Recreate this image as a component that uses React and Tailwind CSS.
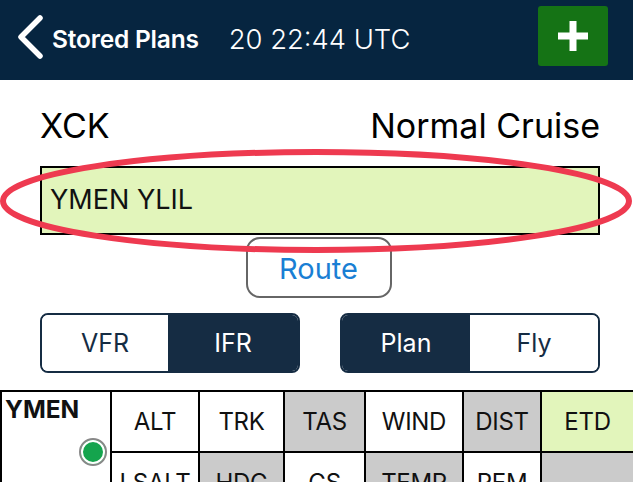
import React from "react";

const font = { fontFamily: "Inter, 'Liberation Sans', sans-serif" };

function Cell({ children, className = "" }) {
	return (
		<div
			className={`flex items-center justify-center text-[24px] tracking-[-0.3px] text-[#111] ${className}`}
		>
			{children}
		</div>
	);
}

function Segment({ left, right, activeLeft, split }) {
	return (
		<div className={`grid h-[60px] w-[260px] overflow-hidden rounded-[8px] border-2 border-[#152c43] text-[25px] ${split}`}>
			<div className={`flex items-center justify-center pt-[2px] ${activeLeft ? "bg-[#152c43] text-white" : "bg-white text-[#152c43]"}`}>
				{left}
			</div>
			<div className={`flex items-center justify-center pt-[2px] ${activeLeft ? "bg-white text-[#152c43]" : "bg-[#152c43] text-white"}`}>
				{right}
			</div>
		</div>
	);
}

export default function App() {
	return (
		<div className="relative h-[482px] w-[633px] overflow-hidden bg-white" style={font}>
			<header className="flex h-20 items-center bg-[#062540] pl-[18px] pr-[25px] text-white">
				<svg width="26" height="44" viewBox="0 0 26 44" fill="none" className="mb-[7px] mr-[8px]">
					<path d="M22 3 L3 22 L22 41" stroke="white" strokeWidth="5.5" strokeLinecap="round" strokeLinejoin="round" />
				</svg>
				<span className="pb-[2px] text-[24.5px] font-semibold tracking-[-0.2px]">Stored Plans</span>
				<span className="ml-[30px] text-[27.4px] font-light">20 22:44 UTC</span>
				<button className="mb-[8px] ml-auto flex h-[60px] w-[70px] items-center justify-center rounded-[3px] bg-[#157315]">
					<svg width="32" height="32" viewBox="0 0 32 32">
						<path d="M12.5 1h7v11.5H31v7H19.5V31h-7V19.5H1v-7h11.5z" fill="white" />
					</svg>
				</button>
			</header>

			<main className="pl-10 pr-[33px]">
				<div className="flex h-[86px] items-center justify-between pt-[4px] text-[34px] text-black">
					<span>XCK</span>
					<span>Normal Cruise</span>
				</div>
				<div className="flex h-[69px] items-center border-2 border-black bg-[#e2f5bb] pl-2 text-[27px] text-[#111]">
					YMEN YLIL
				</div>
				<div className="mt-[2px] flex justify-center pr-[3px]">
					<button className="h-[61px] w-[146px] rounded-[14px] border-2 border-[#666] bg-white pt-[2px] text-[29px] text-[#1a7fd4]">
						Route
					</button>
				</div>
				<div className="mt-[15px] flex justify-between">
					<Segment left="VFR" right="IFR" split="grid-cols-[126px_1fr]" />
					<Segment left="Plan" right="Fly" activeLeft split="grid-cols-[128px_1fr]" />
				</div>
			</main>

			<div className="mt-[17px] grid grid-cols-[108px_86px_83px_79px_96px_76px_91px] grid-rows-[59px_60px] gap-[2px] border-l-2 border-t-2 border-black bg-black">
				<div className="relative row-span-2 bg-white pl-[3px] text-[24.5px] font-bold leading-[34px] text-[#111]">
					YMEN
					<div className="absolute left-[77px] top-[46px] h-[28px] w-[28px] rounded-full border-2 border-[#888] bg-[#14a44d] outline-2 -outline-offset-4 outline-white" />
				</div>
				<Cell className="bg-white">ALT</Cell>
				<Cell className="bg-white">TRK</Cell>
				<Cell className="bg-[#cbcbcb]">TAS</Cell>
				<Cell className="bg-white">WIND</Cell>
				<Cell className="bg-[#cbcbcb]">DIST</Cell>
				<Cell className="bg-[#e2f5bb]">ETD</Cell>
				<Cell className="bg-white">LSALT</Cell>
				<Cell className="bg-[#cbcbcb]">HDG</Cell>
				<Cell className="bg-white">GS</Cell>
				<Cell className="bg-[#cbcbcb]">TEMP</Cell>
				<Cell className="bg-white">REM</Cell>
				<Cell className="bg-[#cbcbcb]"></Cell>
			</div>

			{/* hand drawn annotation over the route field */}
			<svg className="pointer-events-none absolute inset-0" width="633" height="482" viewBox="0 0 633 482" fill="none">
				<ellipse cx="316" cy="201" rx="313" ry="49" stroke="#ee3a50" strokeWidth="6" />
			</svg>
		</div>
	);
}
